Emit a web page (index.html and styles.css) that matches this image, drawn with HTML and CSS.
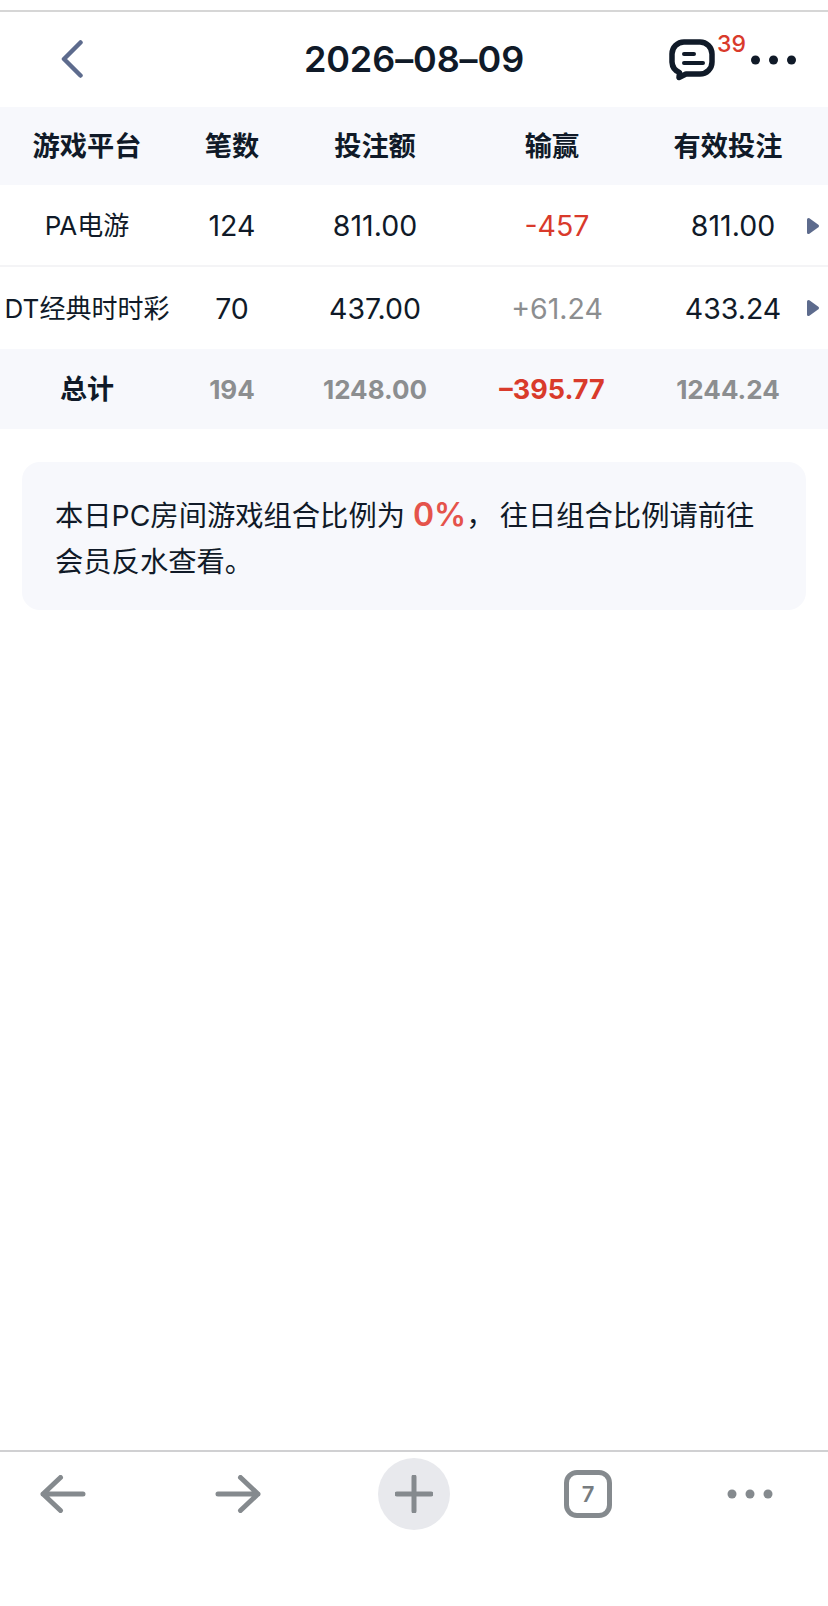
FILE: index.html
```html
<!DOCTYPE html>
<html lang="zh-CN">
<head>
<meta charset="utf-8">
<title>2026-08-09</title>
<link rel="stylesheet" href="styles.css">
</head>
<body>
<div class="page">
  <header class="topbar">
    <svg class="back" width="24" height="38" viewBox="0 0 24 38"><path d="M20.500 2.500 4 19l16.500 16.500"/></svg>
    <h1 class="title">2026–08–09</h1>
    <div class="actions">
      <span class="chat">
        <svg width="46" height="42" viewBox="0 0 46 42"><path class="chat-line" d="M15 3h16a12 12 0 0 1 12 12v8a12 12 0 0 1-12 12H17l-7 3.500 .5-5A12 12 0 0 1 3 23v-8A12 12 0 0 1 15 3Z"/><path class="chat-line thin" d="M15 15h10M15 24h19"/></svg>
        <span class="badge">39</span>
      </span>
      <svg class="more" width="45" height="10" viewBox="0 0 45 10"><circle cx="4.500" cy="5" r="4.500"/><circle cx="22.500" cy="5" r="4.500"/><circle cx="40.500" cy="5" r="4.500"/></svg>
    </div>
  </header>

  <section class="table">
    <div class="row head">
      <div>游戏平台</div><div>笔数</div><div>投注额</div><div>输赢</div><div>有效投注</div>
    </div>
    <div class="row body divided">
      <div class="name">PA电游</div><div>124</div><div>811.00</div><div class="loss shifted">-457</div><div class="shifted">811.00</div>
      <svg class="caret" width="14" height="20" viewBox="0 0 14 20"><path d="M2.500 3.500 11.500 10 2.500 16.500Z"/></svg>
    </div>
    <div class="row body">
      <div class="name">DT经典时时彩</div><div>70</div><div>437.00</div><div class="win shifted">+61.24</div><div class="shifted">433.24</div>
      <svg class="caret" width="14" height="20" viewBox="0 0 14 20"><path d="M2.500 3.500 11.500 10 2.500 16.500Z"/></svg>
    </div>
    <div class="row total">
      <div class="label">总计</div><div>194</div><div>1248.00</div><div class="loss">–395.77</div><div>1244.24</div>
    </div>
  </section>

  <div class="note">
    <span class="line">本日PC房间游戏组合比例为 <strong>0%</strong>，&thinsp;往日组合比例请前往</span>
    <span class="line">会员反水查看。</span>
  </div>

  <nav class="toolbar">
    <svg width="46" height="38" viewBox="0 0 46 38"><path class="tool" d="M43 19H3M20.500 2.500 3 19l17.500 16.500"/></svg>
    <svg width="46" height="38" viewBox="0 0 46 38"><path class="tool" d="M3 19h40M25.500 2.500 43 19 25.500 35.500"/></svg>
    <span class="plus"><svg width="38" height="38" viewBox="0 0 38 38"><path class="tool" d="M19 2v34M2 19h34"/></svg></span>
    <span class="tabs">7</span>
    <svg class="tool-dots" width="46" height="12" viewBox="0 0 46 12"><circle cx="5" cy="6" r="4.500"/><circle cx="23" cy="6" r="4.500"/><circle cx="41" cy="6" r="4.500"/></svg>
  </nav>
</div>
</body>
</html>
```

FILE: styles.css
```css
* { box-sizing: border-box; }
html, body { margin: 0; background: #fff; }
body {
  font-family: Inter, "Noto Sans CJK SC", sans-serif;
  color: #101a28;
}
.page {
  height: 1606px;
  display: flex;
  flex-direction: column;
  padding-top: 10px;
}
.topbar {
  height: 97px;
  border-top: 2px solid #d6d6d6;
  display: grid;
  grid-template-columns: 1fr auto 1fr;
  align-items: center;
  padding-bottom: 2px;
}
.back { margin-left: 60px; }
.back path {
  fill: none;
  stroke: #5d6b8d;
  stroke-width: 4.500px;
  stroke-linecap: round;
  stroke-linejoin: round;
}
.title {
  margin: 0;
  font-size: 36px;
  font-weight: 600;
  line-height: 44px;
  letter-spacing: -0.1px;
}
.actions {
  display: flex;
  align-items: center;
  justify-content: flex-end;
  padding-right: 32px;
}
.chat { position: relative; display: flex; margin-right: 36px; margin-top: 2px; }
.chat-line {
  fill: none;
  stroke: #101a28;
  stroke-width: 5.500px;
  stroke-linejoin: round;
  stroke-linecap: round;
}
.chat-line.thin { stroke-width: 4px; }
.badge {
  position: absolute;
  left: 48px;
  top: -8px;
  font-size: 23px;
  line-height: 26px;
  font-weight: 500;
  color: #d93a2b;
}
.more { fill: #101a28; margin-top: 2px; }

.row {
  display: grid;
  grid-template-columns: 174px 116px 170px 184px 168px;
  align-items: center;
  text-align: center;
  position: relative;
}
.head {
  height: 78px;
  background: #f7f8fc;
  font-size: 27.200px;
  font-weight: 700;
  padding-bottom: 4px;
}
.body {
  height: 82px;
  font-size: 28.500px;
}
.divided { border-bottom: 2px solid #f4f4f6; }
.name { font-size: 26px; white-space: nowrap; padding-bottom: 4px; }
.loss { color: #d93a2b; }
.win { color: #8c8e90; }
.shifted { padding-left: 10px; }
.caret {
  position: absolute;
  right: 8px;
  top: 31px;
  fill: #5d6b8d;
  stroke: #5d6b8d;
  stroke-width: 3px;
  stroke-linejoin: round;
}
.total {
  height: 80px;
  background: #f7f8fc;
  font-size: 26px;
  font-weight: 700;
  color: #8c8e90;
}
.total .label { color: #101a28; font-size: 27px; padding-bottom: 4px; }
.total .loss { color: #d93a2b; font-size: 27px; }

.note {
  margin: 33px 22px 0;
  padding: 30px 33px 25px;
  background: #f7f8fc;
  border-radius: 18px;
  font-size: 28.300px;
  line-height: 46px;
}
.line { display: block; white-space: nowrap; }
.note strong {
  font-size: 32px;
  font-weight: 600;
  color: #e5534b;
}

.toolbar {
  margin-top: auto;
  height: 156px;
  border-top: 2px solid #d0d0d2;
  display: grid;
  grid-template-columns: 126px 224px 128px 220px 103px;
  justify-items: center;
  align-items: start;
  padding-top: 6px;
}
.toolbar > svg { margin-top: 17px; }
.tool {
  fill: none;
  stroke: #858a8e;
  stroke-width: 5px;
  stroke-linecap: round;
  stroke-linejoin: round;
}
.plus {
  width: 72px;
  height: 72px;
  border-radius: 50%;
  background: #e8e9ed;
  display: flex;
  align-items: center;
  justify-content: center;
}
.tabs {
  margin-top: 12px;
  width: 48px;
  height: 48px;
  border: 5px solid #858a8e;
  border-radius: 13px;
  display: flex;
  align-items: center;
  justify-content: center;
  font-size: 22px;
  font-weight: 600;
  color: #777c80;
}
.toolbar > .tool-dots { margin-top: 30px; fill: #858a8e; }
```
